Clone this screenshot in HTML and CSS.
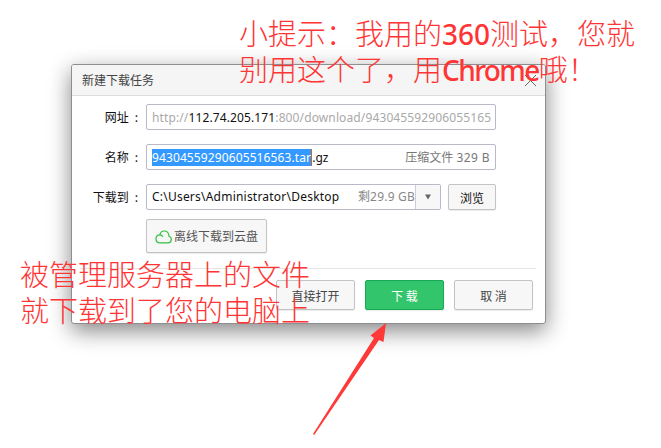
FILE: index.html
```html
<!DOCTYPE html>
<html lang="zh-CN">
<head>
<meta charset="utf-8">
<title>新建下载任务</title>
<link rel="stylesheet" href="styles.css">
</head>
<body>
<main class="dialog">
  <header class="titlebar">
    <h1>新建下载任务</h1>
    <svg class="close" width="13" height="13" viewBox="0 0 13 13"><path d="M1 1L12 12M12 1L1 12"/></svg>
  </header>
  <section class="form">
    <div class="row">
      <label>网址<i>:</i></label>
      <div class="field url"><span class="muted">http://</span><span class="host">112.74.205.171</span><span class="muted">:800/download/943045592906055165</span></div>
    </div>
    <div class="row">
      <label>名称<i>:</i></label>
      <div class="field name"><span class="selected">94304559290605516563.tar</span><span>.gz</span><span class="meta">压缩文件 <b>329 B</b></span></div>
    </div>
    <div class="row">
      <label>下载到<i>:</i></label>
      <div class="field path"><span class="location">C:\Users\Administrator\Desktop</span><span class="space">剩29.9 GB</span><span class="drop"><svg width="6" height="6" viewBox="0 0 6 6"><path d="M0 0.5H6L3 5.5Z"/></svg></span></div>
      <button class="btn browse">浏览</button>
    </div>
    <button class="btn cloud"><svg width="17" height="14" viewBox="0 0 17 14"><path d="M4.3 12.8H12.6A3.4 3.4 0 0 0 14 6.2C13.8 3 11.7 1 9.2 1C6.7 1 5.4 2.5 4.8 4.8C2.6 4.8 1 6.5 1 8.8C1 11.2 2.5 12.8 4.3 12.8ZM4.8 4.8C6.4 4.8 7.3 5.5 8 6.7"/></svg><span>离线下载到云盘</span></button>
  </section>
  <footer class="actions">
    <button class="btn">直接打开</button>
    <button class="btn primary">下 载</button>
    <button class="btn">取 消</button>
  </footer>
</main>
<div class="note tip">
  <p>小提示：我用的<b class="num">360</b>测试，您就</p>
  <p>别用这个了，用<b class="word">Chrome</b>哦！</p>
</div>
<div class="note result">
  <p>被管理服务器上的文件</p>
  <p>就下载到了您的电脑上</p>
</div>
<svg class="arrow" width="76" height="114" viewBox="0 0 76 114"><path d="M74 0L71.500 19L67 17L2.200 112L1 111L62 15L58.500 12.500Z"/></svg>
</body>
</html>
```
FILE: styles.css
```css
* { box-sizing: border-box; }
body {
  margin: 0;
  width: 661px;
  height: 448px;
  position: relative;
  overflow: hidden;
  background: #fff;
  padding: 64px 0 0 71px;
  font: 12px "Noto Sans", "Noto Sans CJK SC", sans-serif;
  color: #111;
}
.dialog {
  width: 475px;
  height: 260px;
  background: #fff;
  border: 1px solid #8e8e92;
  border-radius: 3px;
  box-shadow: 0 7px 22px rgba(0, 0, 0, .48);
}
.titlebar {
  height: 31px;
  padding: 0 8px 0 10px;
  display: flex;
  align-items: center;
  justify-content: space-between;
  background: #f5f5f5;
  border-bottom: 1px solid #dcdcdc;
  border-radius: 2px 2px 0 0;
}
h1 { margin: 0; padding-bottom: 1px; font: 12px "Noto Sans CJK SC", sans-serif; color: #444; }
.close { fill: none; stroke: #666; stroke-width: 1; }
.form { padding: 8px 0 0; }
.row { height: 26px; margin-bottom: 14px; display: flex; align-items: center; }
label { width: 74px; padding: 0 8px 2px 0; text-align: right; font-family: "Noto Sans CJK SC", sans-serif; }
label i { font-style: normal; margin-left: 6px; }
.field {
  width: 350px;
  height: 26px;
  padding: 0 5px;
  display: flex;
  align-items: center;
  border: 1px solid #b9bac9;
  border-radius: 2px;
  white-space: pre;
}
.muted { color: #a9a9a9; }
.url { letter-spacing: .12px; }
.selected { background: #3399ff; color: #fff; line-height: 17px; letter-spacing: .11px; border-right: 1px solid #c66a1c; }
.meta { margin-left: auto; color: #777; padding-bottom: 1px; }
.meta b { font-weight: 400; letter-spacing: .4px; }
.path { width: 295px; padding-right: 0; }
.location { letter-spacing: .22px; padding-bottom: 2px; }
.space { margin-left: auto; padding: 0 0 2px; color: #888; letter-spacing: .2px; }
.drop {
  width: 25px;
  align-self: stretch;
  display: flex;
  align-items: center;
  justify-content: center;
  background: #f7f7f7;
  border-left: 1px solid #ccd;
  fill: #666;
}
.btn {
  height: 30px;
  width: 79px;
  padding: 0;
  display: flex;
  align-items: center;
  justify-content: center;
  background: #f7f7f7;
  border: 1px solid #c3c3c3;
  border-radius: 2px;
  box-shadow: 0 1px 1px rgba(0, 0, 0, .08);
  font: 12px "Noto Sans CJK SC", sans-serif;
  color: #444;
}
.browse { width: 48px; height: 26px; margin-left: 7px; color: #111; }
.cloud { width: 121px; height: 34px; margin: -5px 0 0 74px; gap: 2px; color: #555; }
.cloud svg { fill: none; stroke: #2fc040; stroke-width: 1.2; position: relative; top: 1px; }
.cloud span { padding-bottom: 1px; }
.actions {
  margin: 15px 9px 0 8px;
  padding: 11px 3px 0 0;
  display: flex;
  justify-content: flex-end;
  gap: 10px;
  border-top: 1px solid #e5e5e5;
}
.primary { background: #33c56b; border-color: #18a957; color: #fff; }
.note {
  position: absolute;
  color: #ff3535;
  font: 300 29px/36px "Noto Sans CJK SC", sans-serif;
  white-space: nowrap;
}
.note p { margin: 0; height: 36px; }
.note b { font: 500 28px/30px "Noto Sans", sans-serif; }
.note .num { letter-spacing: 0; }
.note .word { letter-spacing: -1.6px; }
.tip { left: 239px; top: 14px; }
.result { left: 20px; top: 255px; }
.arrow { position: absolute; left: 312px; top: 323px; fill: #ff3838; }
```
